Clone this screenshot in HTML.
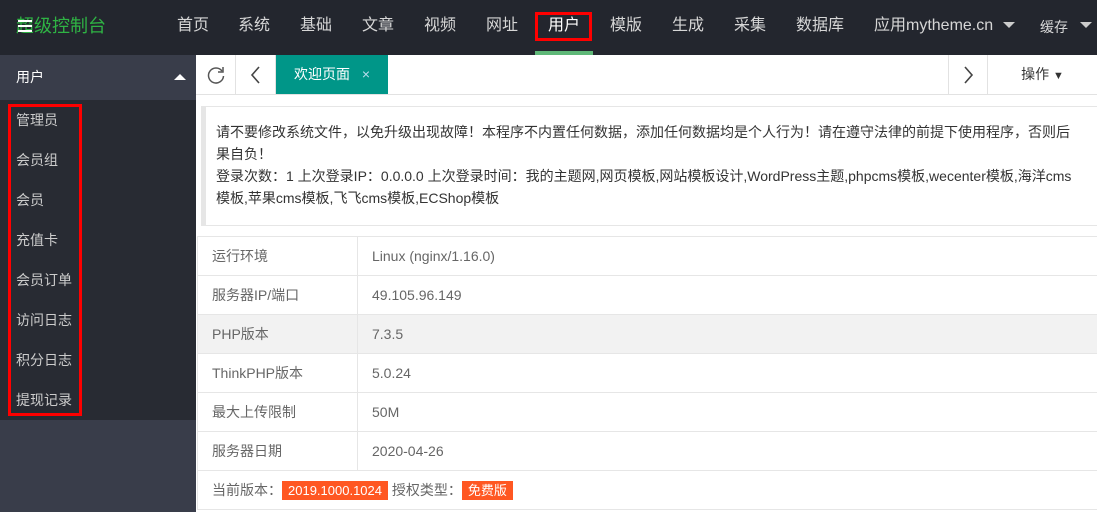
<!DOCTYPE html>
<html><head><meta charset="utf-8"><style>
*{margin:0;padding:0;box-sizing:border-box}
body{width:1097px;height:512px;overflow:hidden;background:#fff;font-family:"Liberation Sans","Noto Sans CJK SC",sans-serif;position:relative}
.hd{position:absolute;left:0;top:0;width:1097px;height:55px;background:#23262e}
.logo{position:absolute;left:16px;top:14px;font-size:18px;color:#2fb344;line-height:24px}
.logo i{position:absolute;left:2px;top:6px;width:14px;height:2px;background:#fff;box-shadow:0 5px 0 #fff,0 10px 0 #fff}
.nav{position:absolute;top:15px;font-size:16px;color:#d6d6d6;line-height:22px;white-space:nowrap}
.sel{position:absolute;left:535px;top:12px;width:57px;height:29px;border:3px solid #f00}
.ul{position:absolute;left:535px;top:51px;width:58px;height:4px;background:#5fb878}
.tri{position:absolute;width:0;height:0;border-left:6px solid transparent;border-right:6px solid transparent;border-top:6px solid #ccc}
.side{position:absolute;left:0;top:55px;width:196px;height:457px;background:#393d4a}
.st{height:45px;color:#fff;font-size:14px;line-height:45px;padding-left:16px;position:relative}
.st:after{content:"";position:absolute;right:10px;top:19px;border-left:6px solid transparent;border-right:6px solid transparent;border-bottom:6px solid #fff}
.items{background:#282b33;height:320px;padding-top:0}
.items div{height:40px;line-height:40px;padding-left:16px;color:#ccc;font-size:14px}
.redbox{position:absolute;left:8px;top:104px;width:74px;height:312px;border:3px solid #f00}
.tabs{position:absolute;left:196px;top:55px;width:901px;height:40px;border-bottom:1px solid #e2e2e2;background:#fff}
.tb{position:absolute;top:0;height:39px;border-right:1px solid #e2e2e2;color:#444;text-align:center;line-height:39px}
.main{position:absolute;left:196px;top:96px;width:901px;height:416px;background:#fff}
.note{position:absolute;left:5px;top:10px;width:900px;height:120px;border:1px solid #e6e6e6;border-left:5px solid #e6e6e6;padding:14px 26px 0 10px;font-size:14px;line-height:22px;color:#333}
table{position:absolute;left:1px;top:140px;width:905px;border-collapse:collapse;font-size:14px;color:#666}
td{border:1px solid #e6e6e6;height:39px;padding-left:14px}
td:first-child{width:160px}
.g td{background:#f2f2f2}
.bd{background:#ff5722;color:#fff;padding:2px 6px;font-size:13px}
</style></head><body>
<div class="hd">
<div class="logo"><i></i>超级控制台</div>
<span class="nav" style="left:177px">首页</span>
<span class="nav" style="left:238px">系统</span>
<span class="nav" style="left:300px">基础</span>
<span class="nav" style="left:362px">文章</span>
<span class="nav" style="left:424px">视频</span>
<span class="nav" style="left:486px">网址</span>
<span class="nav" style="left:548px;color:#fff">用户</span>
<span class="nav" style="left:610px">模版</span>
<span class="nav" style="left:672px">生成</span>
<span class="nav" style="left:734px">采集</span>
<span class="nav" style="left:796px">数据库</span>
<span class="nav" style="left:874px">应用mytheme.cn</span>
<div class="tri" style="left:1003px;top:22px"></div>
<span class="nav" style="left:1040px;font-size:14px;top:16px">缓存</span>
<div class="tri" style="left:1080px;top:22px"></div>
<div class="sel"></div><div class="ul"></div>
</div>
<div class="side">
<div class="st">用户</div>
<div class="items"><div>管理员</div><div>会员组</div><div>会员</div><div>充值卡</div><div>会员订单</div><div>访问日志</div><div>积分日志</div><div>提现记录</div></div>
</div>
<div class="redbox"></div>
<div class="tabs">
<div class="tb" style="left:0;width:40px"><svg width="20" height="20" viewBox="0 0 20 20" style="margin-top:10px"><path d="M16 6A7.5 7.5 0 1 0 17.5 11" fill="none" stroke="#555" stroke-width="1.5"/><path d="M17 2v5h-5" fill="none" stroke="#555" stroke-width="1.5"/></svg></div>
<div class="tb" style="left:40px;width:40px"><svg width="12" height="20" viewBox="0 0 12 20" style="margin-top:10px"><path d="M9 2L2 10l7 8" fill="none" stroke="#444" stroke-width="1.6"/></svg></div>
<div class="tb" style="left:80px;width:112px;background:#009688;color:#fff;font-size:14px;border:none">欢迎页面 <span style="color:#bde;margin-left:8px">×</span></div>
<div class="tb" style="left:752px;width:40px;border-left:1px solid #e2e2e2"><svg width="12" height="20" viewBox="0 0 12 20" style="margin-top:10px"><path d="M3 2l7 8-7 8" fill="none" stroke="#444" stroke-width="1.6"/></svg></div>
<div class="tb" style="left:792px;width:109px;border:none;font-size:14px;color:#333">操作 <span style="font-size:11px">▼</span></div>
</div>
<div class="main">
<div class="note">请不要修改系统文件，以免升级出现故障！本程序不内置任何数据，添加任何数据均是个人行为！请在遵守法律的前提下使用程序，否则后果自负！<br>登录次数：1 上次登录IP：0.0.0.0 上次登录时间：我的主题网,网页模板,网站模板设计,WordPress主题,phpcms模板,wecenter模板,海洋cms模板,苹果cms模板,飞飞cms模板,ECShop模板</div>
<table>
<tr><td>运行环境</td><td>Linux (nginx/1.16.0)</td></tr>
<tr><td>服务器IP/端口</td><td>49.105.96.149</td></tr>
<tr class="g"><td>PHP版本</td><td>7.3.5</td></tr>
<tr><td>ThinkPHP版本</td><td>5.0.24</td></tr>
<tr><td>最大上传限制</td><td>50M</td></tr>
<tr><td>服务器日期</td><td>2020-04-26</td></tr>
<tr><td colspan="2" style="padding-left:14px">当前版本：<span class="bd">2019.1000.1024</span> 授权类型：<span class="bd">免费版</span></td></tr>
</table>
</div>
</body></html>
